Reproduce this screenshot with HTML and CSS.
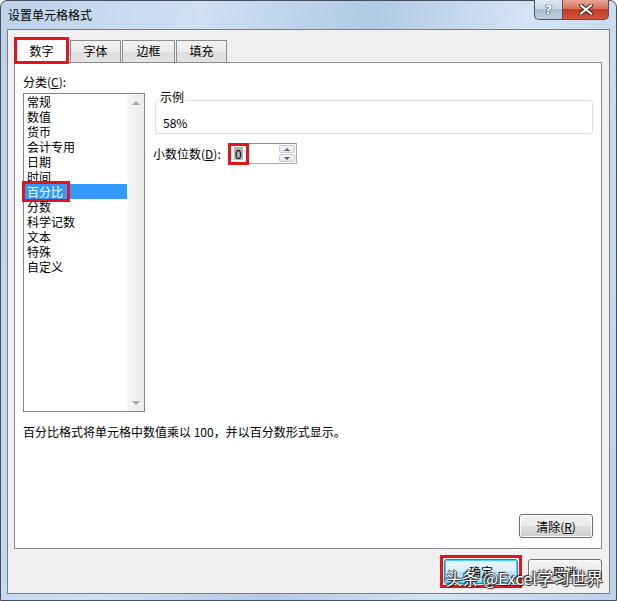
FILE: index.html
```html
<!DOCTYPE html>
<html lang="zh-CN">
<head>
    <meta charset="UTF-8">
    <title>设置单元格格式</title>
    <link rel="stylesheet" href="styles.css">
</head>
<body>
    <div class="window">
        <div class="titlebar">
            <span class="title">设置单元格格式</span>
            <div class="caption">
                <div class="cap help"><span>?</span></div>
                <div class="cap close">
                    <svg width="14" height="11" viewBox="0 0 14 11">
                        <path d="M2 1.5 L12 9.5 M12 1.5 L2 9.5" stroke="#3b2320" stroke-width="4" stroke-linecap="square"/>
                        <path d="M2 1.5 L12 9.5 M12 1.5 L2 9.5" stroke="#ffffff" stroke-width="2" stroke-linecap="square"/>
                    </svg>
                </div>
            </div>
        </div>

        <div class="client">
            <div class="tabs">
                <div class="tab active">数字</div>
                <div class="tab w51">字体</div>
                <div class="tab w53">边框</div>
                <div class="tab w51">填充</div>
            </div>

            <div class="panel">
                <div class="cat-label">分类(<u>C</u>):</div>
                <div class="body">
                    <div class="list">
                        <ul class="items">
                            <li>常规</li>
                            <li>数值</li>
                            <li>货币</li>
                            <li>会计专用</li>
                            <li>日期</li>
                            <li>时间</li>
                            <li class="selected"><span class="mark">百分比</span></li>
                            <li>分数</li>
                            <li>科学记数</li>
                            <li>文本</li>
                            <li>特殊</li>
                            <li>自定义</li>
                        </ul>
                        <div class="scrollbar">
                            <span class="arrow up"></span>
                            <span class="arrow down"></span>
                        </div>
                    </div>

                    <div class="detail">
                        <fieldset class="sample">
                            <legend>示例</legend>
                            <div class="sample-value">58%</div>
                        </fieldset>
                        <div class="decimals">
                            <label class="dec-label">小数位数(<u>D</u>):</label>
                            <div class="spin">
                                <div class="spin-text">
                                    <span class="zero"><span class="sel">0</span></span>
                                </div>
                                <div class="spinner">
                                    <span class="spin-btn"><span class="arrow up"></span></span>
                                    <span class="spin-btn"><span class="arrow down"></span></span>
                                </div>
                            </div>
                        </div>
                    </div>
                </div>

                <p class="desc">百分比格式将单元格中数值乘以 100，并以百分数形式显示。</p>

                <div class="panel-foot">
                    <button class="btn">清除(<u>R</u>)</button>
                </div>
            </div>

            <div class="actions">
                <span class="ok-mark"><button class="btn default">确定</button></span>
                <button class="btn">取消</button>
            </div>
        </div>

        <div class="watermark">头条 @Excel学习世界</div>
    </div>
</body>
</html>
```

FILE: styles.css
```css
* {
    box-sizing: border-box;
}

body {
    margin: 0;
    font-family: "Noto Sans CJK SC", "Microsoft YaHei", sans-serif;
    font-size: 12px;
    color: #000;
    background: #fff;
}

.window {
    position: relative;
    width: 617px;
    height: 601px;
    display: flex;
    flex-direction: column;
    padding: 0 6px 6px;
    border: 1px solid #46505c;
    border-radius: 7px 7px 0 0;
    background: linear-gradient(100deg, #bdd3eb 0%, #cfe0f2 28%, #b2cae5 52%, #d5e4f4 74%, #bcd2eb 100%);
}

.titlebar {
    height: 28px;
    display: flex;
}

.title {
    align-self: center;
    padding-left: 1px;
    line-height: 16px;
}

.caption {
    display: flex;
    height: 20px;
    margin: -1px 1px 0 auto;
}

.cap {
    display: flex;
    align-items: center;
    justify-content: center;
    height: 20px;
    border: 1px solid #4c5766;
    border-top: none;
}

.help {
    width: 28px;
    border-right: none;
    border-radius: 0 0 0 5px;
    background: linear-gradient(#dfe8f2 0%, #c9d7e6 45%, #a9bdd3 50%, #bccde0 100%);
}

.help span {
    font-family: "DejaVu Sans", sans-serif;
    font-weight: bold;
    font-size: 13px;
    line-height: 13px;
    color: #fff;
    text-shadow: 0 0 1px #33404e, 0 0 1px #33404e, 0 0 1px #33404e;
}

.close {
    width: 47px;
    border-radius: 0 0 5px 0;
    background: linear-gradient(#e9a798 0%, #d9705a 45%, #c13b22 50%, #d2533a 100%);
}

.client {
    flex: 1;
    display: flex;
    flex-direction: column;
    padding: 7px 7px 0 6px;
    border: 1px solid #7a7e86;
    background: #f0f0f0;
}

.tabs {
    display: flex;
    align-items: flex-end;
    gap: 1px;
    height: 25px;
}

.tab {
    height: 22px;
    line-height: 20px;
    text-align: center;
    border: 1px solid #898c95;
    border-bottom: none;
    background: linear-gradient(#f3f3f3 0%, #ebebeb 50%, #dddddd 51%, #e4e4e4 100%);
}

.w51 {
    width: 51px;
}

.w53 {
    width: 53px;
}

.tab.active {
    position: relative;
    z-index: 1;
    width: 55px;
    height: 27px;
    margin-bottom: -2px;
    line-height: 26px;
    background: #fff;
    outline: 3px solid #e3141c;
    outline-offset: -3px;
}

.panel {
    flex: 0 0 487px;
    display: flex;
    flex-direction: column;
    padding: 11px 8px 0;
    border: 1px solid #898c95;
    background: #fff;
}

.cat-label {
    line-height: 16px;
}

.body {
    display: flex;
    gap: 8px;
    margin-top: 3px;
}

.list {
    display: flex;
    width: 122px;
    height: 319px;
    border: 1px solid #828790;
    background: #fff;
}

.items {
    flex: 1;
    margin: 0;
    padding: 0;
    list-style: none;
    line-height: 15px;
}

.items li {
    height: 15px;
    padding-left: 3px;
    white-space: nowrap;
}

.items li.selected {
    background: #3399ff;
    color: #fff;
}

.mark {
    display: inline-block;
    height: 15px;
    margin-left: -2px;
    padding: 0 4px 0 2px;
    outline: 3px solid #e3141c;
}

.scrollbar {
    width: 17px;
    display: flex;
    flex-direction: column;
    justify-content: space-between;
    background: linear-gradient(90deg, #f5f5f5, #ececec);
    border-left: 1px solid #f7f7f7;
}

.scrollbar .arrow {
    height: 17px;
}

.arrow {
    display: flex;
    align-items: center;
    justify-content: center;
}

.arrow::before {
    content: "";
    border-left: 4px solid transparent;
    border-right: 4px solid transparent;
}

.arrow.up::before {
    border-bottom: 4px solid #a3a3a3;
}

.arrow.down::before {
    border-top: 4px solid #a3a3a3;
}

.detail {
    flex: 1;
}

.sample {
    margin: -3px 0 0 2px;
    padding: 0 0 2px 3px;
    min-width: 0;
    border: 1px solid #d5dfe5;
    border-radius: 3px;
}

.sample legend {
    padding: 0 1px 6px;
    line-height: 14px;
}

.sample-value {
    margin-top: 5px;
    padding-left: 4px;
    line-height: 16px;
}

.decimals {
    display: flex;
    align-items: center;
    margin-top: 9px;
}

.dec-label {
    width: 76px;
    line-height: 16px;
}

.spin {
    display: flex;
    width: 68px;
    height: 21px;
    border: 1px solid #abadb3;
    border-top-color: #8e9197;
    background: #fff;
}

.spin-text {
    flex: 1;
    display: flex;
    align-items: center;
    padding-left: 1px;
}

.zero {
    display: flex;
    align-items: center;
    width: 15px;
    height: 16px;
    padding-left: 3px;
    outline: 3px solid #e3141c;
}

.sel {
    line-height: 13px;
    padding: 0 1px;
    background: #b4b4b4;
}

.spinner {
    width: 18px;
    display: flex;
    flex-direction: column;
    padding: 1px;
    gap: 1px;
}

.spin-btn {
    flex: 1;
    display: flex;
    border: 1px solid #c9ccd2;
    border-radius: 2px;
    background: linear-gradient(#f4f5f7, #e3e6ea);
}

.spin-btn .arrow {
    flex: 1;
}

.spin-btn .arrow::before {
    border-left-width: 3px;
    border-right-width: 3px;
}

.spin-btn .arrow.up::before {
    border-bottom: 3px solid #4d6185;
}

.spin-btn .arrow.down::before {
    border-top: 3px solid #4d6185;
}

.desc {
    margin: 12px 0 0;
    line-height: 16px;
}

.panel-foot {
    display: flex;
    justify-content: flex-end;
    margin-top: auto;
    padding-bottom: 10px;
}

.btn {
    width: 74px;
    height: 24px;
    padding: 0;
    font-family: inherit;
    font-size: 12px;
    color: #000;
    border: 1px solid #707070;
    border-radius: 3px;
    background: linear-gradient(#f2f2f2 0%, #ebebeb 49%, #dddddd 50%, #cfcfcf 100%);
    box-shadow: inset 0 0 0 1px #fcfcfc;
}

.actions {
    display: flex;
    justify-content: flex-end;
    align-items: center;
    gap: 10px;
    padding-top: 10px;
}

.actions .btn {
    height: 25px;
}

.ok-mark {
    display: flex;
    outline: 3px solid #e3141c;
    outline-offset: 1px;
}

.btn.default {
    border-color: #3c7fb1;
    box-shadow: inset 0 0 0 1px #48d0f8;
    background: linear-gradient(#eaf6fd 0%, #d9f0fc 49%, #bee6fd 50%, #a7d9f5 100%);
}

.watermark {
    position: absolute;
    right: 13px;
    bottom: 12px;
    font-size: 16.5px;
    line-height: 20px;
    color: #fff;
    text-shadow: 0 0 1px #222, 0 0 1px #222, 1px 1px 1px #222, -1px -1px 1px #333;
}
```
